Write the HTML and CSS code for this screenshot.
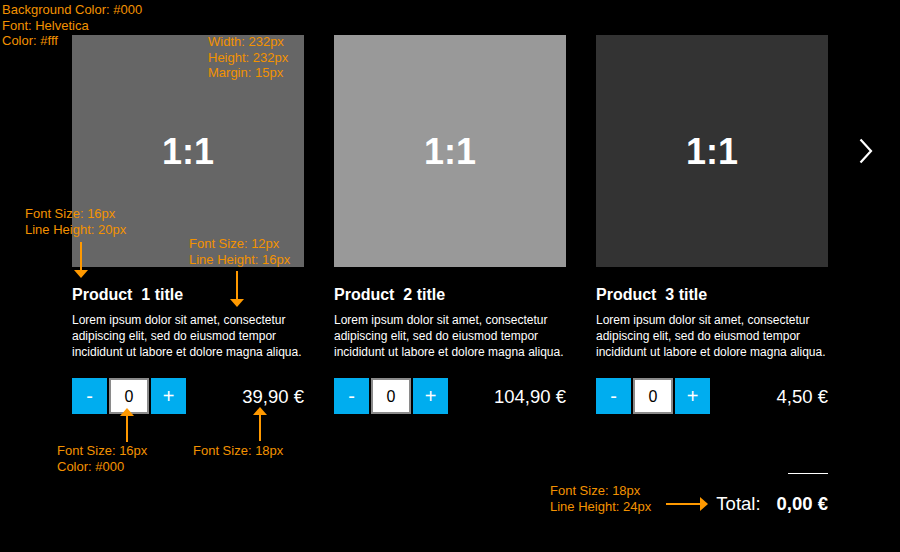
FILE: index.html
```html
<!DOCTYPE html>
<html>
<head>
<meta charset="utf-8">
<link rel="stylesheet" href="styles.css">
</head>
<body>
<div class="page">
  <div class="products">
    <div class="card">
      <div class="thumb thumb-1">1:1</div>
      <h2 class="title">Product&nbsp; 1 title</h2>
      <p class="desc">Lorem ipsum dolor sit amet, consectetur adipiscing elit, sed do eiusmod tempor incididunt ut labore et dolore magna aliqua.</p>
      <div class="buy">
        <div class="qty">
          <button class="btn btn-minus">-</button>
          <div class="field">0</div>
          <button class="btn">+</button>
        </div>
        <div class="price">39,90 €</div>
      </div>
    </div>
    <div class="card">
      <div class="thumb thumb-2">1:1</div>
      <h2 class="title">Product&nbsp; 2 title</h2>
      <p class="desc">Lorem ipsum dolor sit amet, consectetur adipiscing elit, sed do eiusmod tempor incididunt ut labore et dolore magna aliqua.</p>
      <div class="buy">
        <div class="qty">
          <button class="btn btn-minus">-</button>
          <div class="field">0</div>
          <button class="btn">+</button>
        </div>
        <div class="price">104,90 €</div>
      </div>
    </div>
    <div class="card">
      <div class="thumb thumb-3">1:1</div>
      <h2 class="title">Product&nbsp; 3 title</h2>
      <p class="desc">Lorem ipsum dolor sit amet, consectetur adipiscing elit, sed do eiusmod tempor incididunt ut labore et dolore magna aliqua.</p>
      <div class="buy">
        <div class="qty">
          <button class="btn btn-minus">-</button>
          <div class="field">0</div>
          <button class="btn">+</button>
        </div>
        <div class="price">4,50 €</div>
      </div>
    </div>
    <div class="next">
      <svg width="16" height="26" viewBox="0 0 16 26"><path d="M2.5 1.5 L13 13 L2.5 24.5" fill="none" stroke="#fff" stroke-width="2.2"/></svg>
    </div>
  </div>
  <div class="summary">
    <div class="rule"></div>
    <div class="total"><span class="total-label">Total:</span><span class="total-value">0,00 €</span></div>
  </div>
</div>

<div class="note note-global">Background Color: #000<br>Font: Helvetica<br>Color: #fff</div>
<div class="note note-size">Width: 232px<br>Height: 232px<br>Margin: 15px</div>
<div class="note note-title">Font Size: 16px<br>Line Height: 20px</div>
<div class="note note-desc">Font Size: 12px<br>Line Height: 16px</div>
<div class="note note-field">Font Size: 16px<br>Color: #000</div>
<div class="note note-price">Font Size: 18px</div>
<div class="note note-total">Font Size: 18px<br>Line Height: 24px</div>

<svg class="arrow arrow-title" width="14" height="36" viewBox="0 0 14 36"><path d="M7 0 V30" stroke="#f90" stroke-width="2"/><path d="M0 28 H14 L7 36 Z" fill="#f90"/></svg>
<svg class="arrow arrow-desc" width="14" height="36" viewBox="0 0 14 36"><path d="M7 0 V30" stroke="#f90" stroke-width="2"/><path d="M0 28 H14 L7 36 Z" fill="#f90"/></svg>
<svg class="arrow arrow-field" width="14" height="34" viewBox="0 0 14 34"><path d="M7 34 V6" stroke="#f90" stroke-width="2"/><path d="M0 8 H14 L7 0 Z" fill="#f90"/></svg>
<svg class="arrow arrow-price" width="14" height="34" viewBox="0 0 14 34"><path d="M7 34 V6" stroke="#f90" stroke-width="2"/><path d="M0 8 H14 L7 0 Z" fill="#f90"/></svg>
<svg class="arrow arrow-total" width="42" height="14" viewBox="0 0 42 14"><path d="M0 7 H36" stroke="#f90" stroke-width="2"/><path d="M34 0 V14 L42 7 Z" fill="#f90"/></svg>
</body>
</html>
```

FILE: styles.css
```css
* { box-sizing: border-box; }

html, body {
  margin: 0;
  padding: 0;
  background: #000;
  color: #fff;
  font-family: "Liberation Sans", Arial, Helvetica, sans-serif;
}

body {
  width: 900px;
  height: 552px;
  overflow: hidden;
  position: relative;
}

.page {
  padding: 35px 0 0 72px;
  width: 828px;
}

.products {
  display: flex;
  gap: 30px;
}

.card {
  width: 232px;
  flex: none;
}

.thumb {
  width: 232px;
  height: 232px;
  display: flex;
  align-items: center;
  justify-content: center;
  padding-top: 2px;
  font-size: 36px;
  font-weight: bold;
  color: #fff;
}

.thumb-1 { background: #666; }
.thumb-2 { background: #999; }
.thumb-3 { background: #333; }

.title {
  margin: 18px 0 7px;
  font-size: 16px;
  line-height: 20px;
  font-weight: bold;
}

.desc {
  margin: 0;
  font-size: 12px;
  line-height: 16px;
  color: #fff;
}

.buy {
  margin-top: 18px;
  display: flex;
  align-items: center;
  justify-content: space-between;
}

.qty {
  display: flex;
  align-items: stretch;
  gap: 2px;
  height: 36px;
}

.btn {
  width: 35px;
  height: 36px;
  border: 0;
  padding: 0;
  margin: 0;
  background: #00adef;
  color: #fff;
  font-family: inherit;
  font-size: 20px;
  line-height: 36px;
}

.btn-minus { padding-bottom: 2px; }

.field {
  width: 40px;
  height: 36px;
  background: #fff;
  border: 2px solid #8a8a8a;
  color: #000;
  font-size: 16px;
  line-height: 33px;
  text-align: center;
}

.price {
  font-size: 18.5px;
  line-height: 24px;
  padding-top: 2px;
}

.next {
  margin-top: 103px;
  height: 26px;
}

.next svg { display: block; }

.summary {
  display: flex;
  flex-direction: column;
  align-items: flex-end;
  margin-top: 59px;
}

.rule {
  width: 40px;
  height: 1px;
  background: #fff;
}

.total {
  margin-top: 17px;
  font-size: 18.5px;
  line-height: 24px;
  display: flex;
  gap: 16px;
  padding-top: 1px;
}

.total-value { font-weight: bold; }

.note {
  position: absolute;
  color: #f39200;
  font-size: 13px;
  line-height: 16px;
  white-space: nowrap;
}

.note-global { left: 2px; top: 2px; line-height: 15.5px; }
.note-size { left: 208px; top: 34px; line-height: 15.5px; }
.note-title { left: 25px; top: 206px; }
.note-desc { left: 189px; top: 236px; }
.note-field { left: 57px; top: 443px; }
.note-price { left: 193px; top: 443px; }
.note-total { left: 550px; top: 483px; }

.arrow { position: absolute; display: block; }
.arrow-title { left: 74px; top: 242px; }
.arrow-desc { left: 230px; top: 271px; }
.arrow-field { left: 120px; top: 408px; }
.arrow-price { left: 253px; top: 407px; }
.arrow-total { left: 666px; top: 497px; }
```
